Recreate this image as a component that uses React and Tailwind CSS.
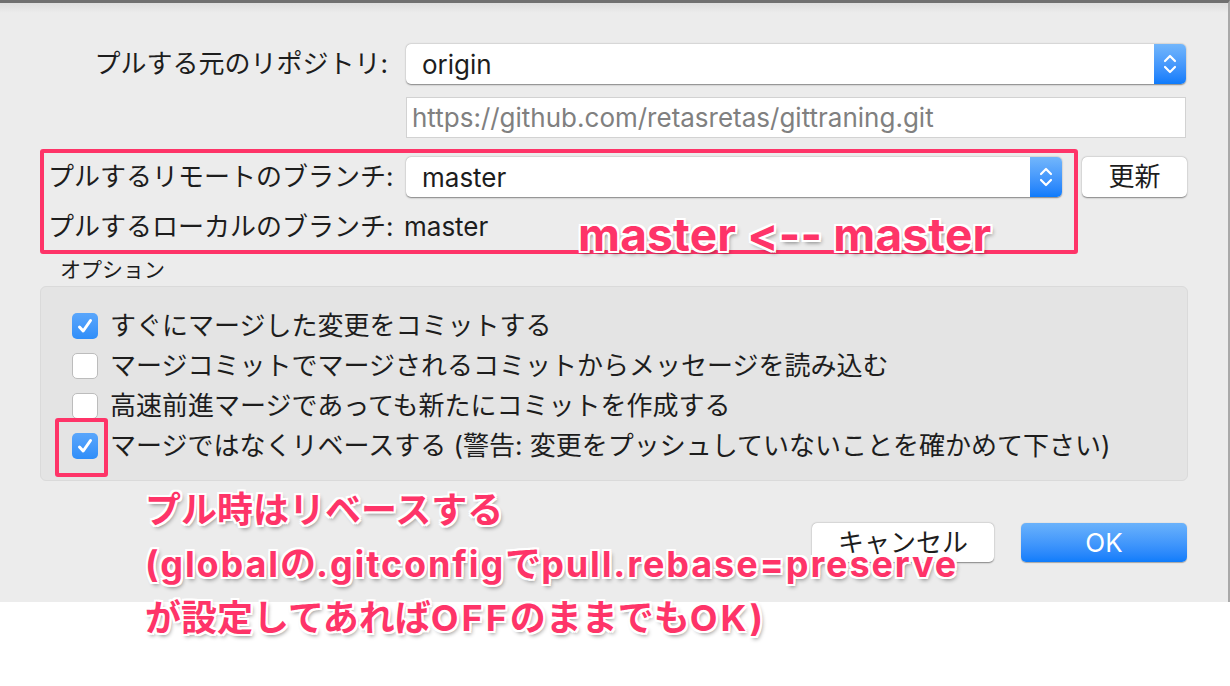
// Pull dialog (SourceTree-style) with pink annotation overlays
import React from 'react';

const UI = "font-['Inter','Noto_Sans_CJK_JP',sans-serif]";
const NOTE =
  "font-['Inter','Noto_Sans_CJK_JP',sans-serif] font-bold [font-variant-ligatures:none] text-[#fe3468] [text-shadow:2px_0_0_#fff,-2px_0_0_#fff,0_2px_0_#fff,0_-2px_0_#fff,2px_2px_0_#fff,-2px_-2px_0_#fff,2px_-2px_0_#fff,-2px_2px_0_#fff,2px_3px_4px_rgba(0,0,0,0.45)]";

/* ── blue up/down stepper on the popup buttons ── */
function Stepper() {
  return (
    <div className="flex h-full w-[32px] items-center justify-center bg-linear-to-b from-[#72b6fb] to-[#0c7bfb]">
      <svg width="16" height="26" viewBox="0 0 16 26" fill="none" stroke="white" strokeWidth="2.2" strokeLinecap="round" strokeLinejoin="round">
        <path d="M3 10 L8 5 L13 10" />
        <path d="M3 16 L8 21 L13 16" />
      </svg>
    </div>
  );
}

function Select({ value, className }) {
  return (
    <div className={`flex h-[40px] items-stretch overflow-hidden rounded-[5px] bg-white shadow-[0_0.5px_1.5px_rgba(0,0,0,0.45)] ${className}`}>
      <div className="flex flex-1 items-center pl-[16px] text-[26px] text-[#1d1d1d]">{value}</div>
      <Stepper />
    </div>
  );
}

function Checkbox({ checked }) {
  if (checked) {
    return (
      <div className="flex size-[26px] shrink-0 items-center justify-center rounded-[5px] bg-linear-to-b from-[#5aa6fb] to-[#2f8ef9]">
        <svg width="20" height="20" viewBox="0 0 20 20" fill="none" stroke="white" strokeWidth="3" strokeLinecap="round" strokeLinejoin="round">
          <path d="M4.5 11 L8.2 15 L15.5 4.5" />
        </svg>
      </div>
    );
  }
  return <div className="size-[26px] shrink-0 rounded-[5px] border border-[#bcbcbc] bg-white" />;
}

const options = [
  { label: 'すぐにマージした変更をコミットする', checked: true },
  { label: 'マージコミットでマージされるコミットからメッセージを読み込む', checked: false },
  { label: '高速前進マージであっても新たにコミットを作成する', checked: false },
  { label: 'マージではなくリベースする (警告: 変更をプッシュしていないことを確かめて下さい)', checked: true },
];

export default function App() {
  return (
    <div className={`relative h-[686px] w-[1230px] overflow-hidden bg-white ${UI}`}>
      {/* Dialog */}
      <div className="h-[602px] w-[1230px] border-t-[3px] border-r-2 border-t-[#707070] border-r-[#a9a9a9] bg-[linear-gradient(#dedede,#ececec_10px)] pt-[41px] text-[#1d1d1d]">
        {/* source repository */}
        <div className="flex h-[40px] items-center">
          <div className="w-[388px] text-right text-[26px] leading-none">プルする元のリポジトリ:</div>
          <Select value="origin" className="ml-[18px] w-[780px]" />
        </div>
        <div className="ml-[406px] mt-[13px] flex h-[41px] w-[780px] items-center border border-[#d2d2d2] bg-white pl-[5px] text-[26px] text-[#808080]">
          https://github.com/retasretas/gittraning.git
        </div>

        {/* branches (highlighted) */}
        <div className="mt-[11px] flex items-start">
          <div className="ml-[40px] h-[105px] w-[1038px] rounded-[3px] border-4 border-[#fe3468] pl-[4px] pt-[4px]">
            <div className="flex h-[40px] items-center">
              <div className="w-[358px] text-[26px] leading-none">プルするリモートのブランチ:</div>
              <Select value="master" className="w-[656px]" />
            </div>
            <div className="mt-[10px] flex h-[40px] items-center text-[26px] leading-none">
              <div className="w-[356px]">プルするローカルのブランチ:</div>
              <div>master</div>
            </div>
          </div>
          <button className="ml-[4px] mt-[8px] flex h-[40px] w-[105px] items-center justify-center rounded-[5px] bg-white text-[26px] leading-none shadow-[0_0.5px_1.5px_rgba(0,0,0,0.45)]">
            更新
          </button>
        </div>

        {/* options */}
        <div className="mt-[4px] h-[24px] pl-[60px] text-[21px] leading-[24px]">オプション</div>
        <div className="relative ml-[40px] mt-[4px] h-[195px] w-[1148px] rounded-[6px] border border-[#dadada] bg-[#e4e4e4] pl-[31px] pt-[19px]">
          {options.map((o) => (
            <div key={o.label} className="flex h-[40px] items-center gap-[12px]">
              <Checkbox checked={o.checked} />
              <span className="text-[26px] leading-none">{o.label}</span>
            </div>
          ))}
          <div className="absolute left-[14px] top-[131px] h-[59px] w-[53px] rounded-[3px] border-4 border-[#fe3468]" />
        </div>

        {/* buttons */}
        <div className="mt-[42px] flex justify-end gap-[27px] pr-[41px]">
          <button className="flex h-[39px] w-[182px] items-center justify-center rounded-[5px] bg-white text-[26px] leading-none shadow-[0_0.5px_1.5px_rgba(0,0,0,0.45)]">
            キャンセル
          </button>
          <button className="flex h-[39px] w-[166px] items-center justify-center rounded-[5px] bg-linear-to-b from-[#6ab2fb] to-[#0e7cfb] text-[26px] leading-none text-white shadow-[0_0.5px_1px_rgba(0,0,0,0.3)]">
            OK
          </button>
        </div>
      </div>

      {/* Annotations */}
      <div className={`absolute left-[578px] top-[209px] whitespace-pre text-[46px] leading-[50px] tracking-[0.2px] ${NOTE}`}>master {'<--'} master</div>
      <div className={`absolute left-[145px] top-[483px] whitespace-pre text-[36px] leading-[54px] ${NOTE}`}>
        <div>プル時はリベースする</div>
        <div>
          <span className="tracking-[1.9px]">(global</span>の<span className="tracking-[1.9px]">.gitconfig</span>で<span className="tracking-[1.9px]">pull.rebase=preserve</span>
        </div>
        <div>
          が設定してあれば<span className="tracking-[3px]">OFF</span>のままでも<span className="tracking-[3px]">OK)</span>
        </div>
      </div>
    </div>
  );
}
